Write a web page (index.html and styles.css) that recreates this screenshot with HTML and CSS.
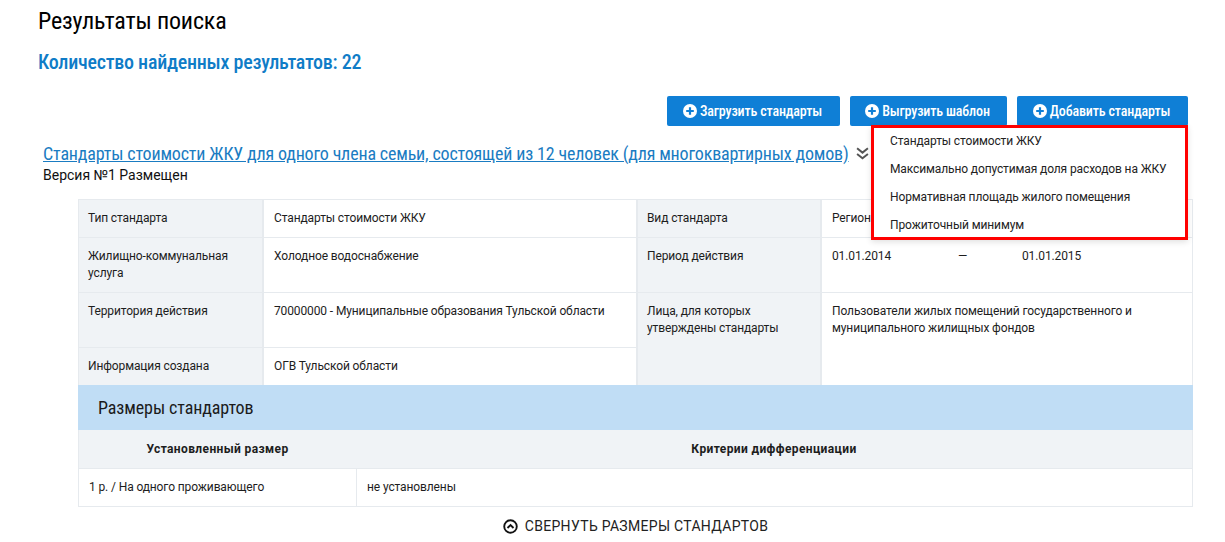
FILE: index.html
```html
<!DOCTYPE html>
<html lang="ru">
<head>
<meta charset="utf-8">
<title>Результаты поиска</title>
<link rel="stylesheet" href="styles.css">
</head>
<body>
<main class="page">
  <h1 class="title">Результаты поиска</h1>
  <h2 class="count">Количество найденных результатов: 22</h2>
  <div class="actions">
    <button class="btn w1"><svg class="plus" viewBox="0 0 14 14"><circle cx="7" cy="7" r="7" fill="#fff"/><path d="M7 3.2v7.6M3.2 7h7.6" stroke="#0f7fd6" stroke-width="2.2"/></svg>Загрузить стандарты</button>
    <button class="btn w2"><svg class="plus" viewBox="0 0 14 14"><circle cx="7" cy="7" r="7" fill="#fff"/><path d="M7 3.2v7.6M3.2 7h7.6" stroke="#0f7fd6" stroke-width="2.2"/></svg>Выгрузить шаблон</button>
    <div class="dropdown">
      <button class="btn w3"><svg class="plus" viewBox="0 0 14 14"><circle cx="7" cy="7" r="7" fill="#fff"/><path d="M7 3.2v7.6M3.2 7h7.6" stroke="#0f7fd6" stroke-width="2.2"/></svg>Добавить стандарты</button>
      <ul class="menu">
        <li>Стандарты стоимости ЖКУ</li>
        <li>Максимально допустимая доля расходов на ЖКУ</li>
        <li>Нормативная площадь жилого помещения</li>
        <li>Прожиточный минимум</li>
      </ul>
    </div>
  </div>
  <div class="heading">
    <a class="doc-link" href="#">Стандарты стоимости ЖКУ для одного члена семьи, состоящей из 12 человек (для многоквартирных домов)</a>
    <svg class="chev" viewBox="0 0 12 12"><path d="M1 1.2 6 5.2l5-4M1 6.5l5 4 5-4" fill="none" stroke="#555" stroke-width="1.8"/></svg>
  </div>
  <div class="version">Версия №1 Размещен</div>

  <section class="card">
    <div class="info">
      <div class="half">
        <div class="row r38"><div class="lbl">Тип стандарта</div><div class="val">Стандарты стоимости ЖКУ</div></div>
        <div class="row r55"><div class="lbl">Жилищно-коммунальная услуга</div><div class="val">Холодное водоснабжение</div></div>
        <div class="row r55"><div class="lbl">Территория действия</div><div class="val">70000000 - Муниципальные образования Тульской области</div></div>
        <div class="row grow last"><div class="lbl">Информация создана</div><div class="val">ОГВ Тульской области</div></div>
      </div>
      <div class="half right">
        <div class="row r38"><div class="lbl">Вид стандарта</div><div class="val">Региональный</div></div>
        <div class="row r55"><div class="lbl">Период действия</div><div class="val period"><span>01.01.2014</span><span>—</span><span>01.01.2015</span></div></div>
        <div class="row grow last"><div class="lbl">Лица, для которых утверждены стандарты</div><div class="val">Пользователи жилых помещений государственного и муниципального жилищных фондов</div></div>
      </div>
    </div>
    <div class="band">Размеры стандартов</div>
    <div class="sizes head"><div>Установленный размер</div><div>Критерии дифференциации</div></div>
    <div class="sizes body"><div>1 р. / На одного проживающего</div><div>не установлены</div></div>
  </section>
  <div class="collapse"><svg class="up" viewBox="0 0 16 16"><circle cx="8" cy="8" r="6.7" fill="none" stroke="#111" stroke-width="2"/><path d="M4.8 9.6 8 6.4l3.2 3.2" fill="none" stroke="#111" stroke-width="2"/></svg>СВЕРНУТЬ РАЗМЕРЫ СТАНДАРТОВ</div>
</main>
</body>
</html>
```
FILE: styles.css
```css
* { box-sizing: border-box; }
html, body { margin: 0; background: #fff; }
body { font-family: Roboto, "Liberation Sans", sans-serif; color: #1d1d1d; font-size: 12px; letter-spacing: -.12px; height: 542px; overflow: hidden; }
.page { padding: 0 32px 0 38px; }
.title { margin: 0; padding-top: 7px; font-size: 24px; line-height: 28px; font-weight: 400; font-stretch: 82%; letter-spacing: -.18px; color: #000; }
.count { margin: 0; padding-top: 15px; padding-bottom: 1px; font-size: 20px; line-height: 24px; font-weight: 500; font-stretch: 83%; color: #0f7cc7; letter-spacing: -.25px; }
.actions { display: flex; justify-content: flex-end; gap: 10px; margin-top: 21px; padding-right: 5px; }
.btn { display: flex; align-items: center; justify-content: center; height: 30px; padding: 0 2px 0 0; border: 0; border-radius: 2px; background: #0f7fd6; color: #fff; font: 500 14px/30px Roboto, sans-serif; font-stretch: 85%; letter-spacing: -.15px; white-space: nowrap; }
.w1 { width: 173px; }
.w2 { width: 157px; }
.w3 { width: 171px; }
.plus { width: 14px; height: 14px; margin-right: 3px; flex: none; }
.dropdown { position: relative; }
.menu { position: absolute; z-index: 2; top: 29px; right: 0; width: 317px; height: 115px; margin: 0; padding: 1px 0 0 16px; list-style: none; background: #fff; border: 3px solid #f00; box-shadow: 0 2px 6px rgba(0,0,0,.12); font-size: 12px; color: #222; }
.menu li { height: 28px; line-height: 25px; white-space: nowrap; }
.heading { display: flex; align-items: center; margin: 16px 0 1px 5px; height: 23px; }
.doc-link { font-size: 18px; line-height: 23px; font-stretch: 85%; color: #1a7cc2; text-decoration: underline; white-space: nowrap; letter-spacing: -.17px; }
.chev { width: 13px; height: 13px; margin-left: 7px; flex: none; }
.version { margin-left: 5px; font-size: 14px; line-height: 18px; letter-spacing: 0; color: #111; }
.card { width: 1115px; margin: 15px 0 0 40px; }
.info { display: flex; height: 186px; }
.half { display: flex; flex-direction: column; width: 559px; border: 1px solid #e6eaee; border-bottom: 0; }
.half.right { width: 556px; border-left: 1px solid #e6eaee; }
.row { display: flex; border-bottom: 1px solid #e6eaee; }
.r38 { height: 38px; }
.r55 { height: 55px; }
.grow { flex: 1; }
.last { border-bottom: 0; }
.lbl { width: 185px; flex: none; padding: 10px 9px; line-height: 17px; background: #f0f3f6; border-right: 2px solid #e6eaee; }
.right .lbl { width: 184px; }
.val { flex: 1; padding: 10px; line-height: 17px; }
.period { display: flex; }
.period span:nth-child(1) { width: 126px; }
.period span:nth-child(2) { width: 64px; }
.band { height: 45px; padding-left: 20px; background: #c0ddf5; font-size: 18px; line-height: 45px; font-stretch: 85%; letter-spacing: -.1px; color: #1b1b1b; }
.sizes { display: grid; grid-template-columns: 277px 1fr; height: 38px; border: 1px solid #e6eaee; border-top: 0; line-height: 37px; }
.head { height: 39px; line-height: 38px; background: #f0f3f6; font-weight: 700; text-align: center; letter-spacing: .38px; }
.body > div { padding-left: 10px; }
.body > div + div { border-left: 1px solid #e6eaee; }
.collapse { display: flex; align-items: center; justify-content: center; width: 1115px; margin: 9px 0 0 40px; font-size: 14px; line-height: 20px; letter-spacing: .3px; color: #222; }
.up { width: 15px; height: 15px; margin-right: 7px; flex: none; }
```
